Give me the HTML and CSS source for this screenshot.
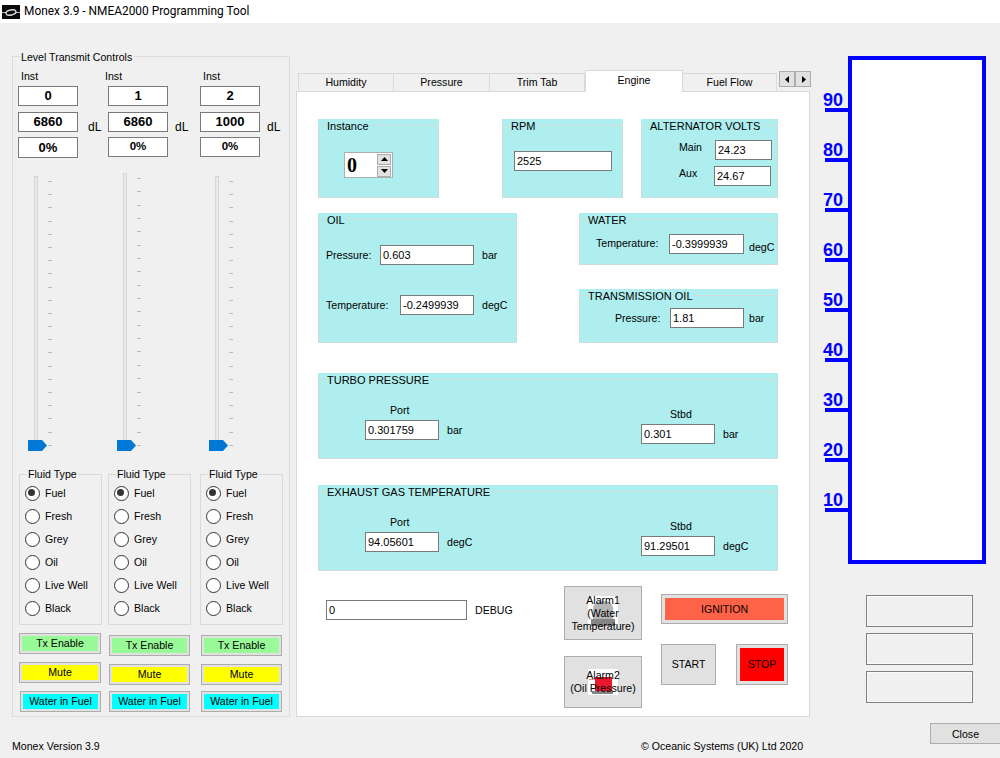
FILE: index.html
```html
<!DOCTYPE html>
<html lang="en">
<head>
    <meta charset="UTF-8">
    <title>Monex 3.9 - NMEA2000 Programming Tool</title>
    <link rel="stylesheet" href="styles.css">
</head>
<body>

<div class="window">
    <!-- Title bar -->
    <div class="titlebar">
        <svg class="app-icon" width="18" height="14" viewBox="0 0 18 14">
            <rect width="18" height="14" fill="#0a0a0a"/>
            <path d="M0 7.5H4M14 7.5H18" stroke="#bbb" stroke-width="1"/>
            <ellipse cx="9" cy="7.5" rx="5" ry="2.5" fill="none" stroke="#ddd" stroke-width="1.4" transform="rotate(-12 9 7.5)"/>
        </svg>
        <span class="title-text">Monex 3.9 - NMEA2000 Programming Tool</span>
    </div>

    <div class="main">
        <!-- Left panel -->
        <div class="left-col">
            <div class="group level-group">
                <div class="legend">Level Transmit Controls</div>
                <div class="level-grid">

                    <div class="level col-a">
                        <div class="inst-label">Inst</div>
                        <div class="value-box">0</div>
                        <div class="value-row"><div class="value-box">6860</div><span class="unit">dL</span></div>
                        <div class="value-box pct">0%</div>
                        <div class="slider">
                            <div class="track"></div>
                            <div class="ticks"><i></i><i></i><i></i><i></i><i></i><i></i><i></i><i></i><i></i><i></i><i></i><i></i><i></i><i></i><i></i><i></i><i></i><i></i><i></i><i></i><i></i></div>
                            <svg class="thumb" width="19" height="11" viewBox="0 0 19 11"><path d="M0 0H14L19 5.5L14 11H0Z" fill="#0078d7"/></svg>
                        </div>
                        <div class="group fluid">
                            <div class="legend">Fluid Type</div>
                            <div class="radio on">Fuel</div>
                            <div class="radio">Fresh</div>
                            <div class="radio">Grey</div>
                            <div class="radio">Oil</div>
                            <div class="radio">Live Well</div>
                            <div class="radio">Black</div>
                        </div>
                        <div class="level-btns">
                            <div class="btn green"><span>Tx Enable</span></div>
                            <div class="btn yellow"><span>Mute</span></div>
                            <div class="btn cyan"><span>Water in Fuel</span></div>
                        </div>
                    </div>

                    <div class="level col-b">
                        <div class="inst-label">Inst</div>
                        <div class="value-box">1</div>
                        <div class="value-row"><div class="value-box">6860</div><span class="unit">dL</span></div>
                        <div class="value-box pct">0%</div>
                        <div class="slider">
                            <div class="track"></div>
                            <div class="ticks"><i></i><i></i><i></i><i></i><i></i><i></i><i></i><i></i><i></i><i></i><i></i><i></i><i></i><i></i><i></i><i></i><i></i><i></i><i></i><i></i><i></i></div>
                            <svg class="thumb" width="19" height="11" viewBox="0 0 19 11"><path d="M0 0H14L19 5.5L14 11H0Z" fill="#0078d7"/></svg>
                        </div>
                        <div class="group fluid">
                            <div class="legend">Fluid Type</div>
                            <div class="radio on">Fuel</div>
                            <div class="radio">Fresh</div>
                            <div class="radio">Grey</div>
                            <div class="radio">Oil</div>
                            <div class="radio">Live Well</div>
                            <div class="radio">Black</div>
                        </div>
                        <div class="level-btns">
                            <div class="btn green"><span>Tx Enable</span></div>
                            <div class="btn yellow"><span>Mute</span></div>
                            <div class="btn cyan"><span>Water in Fuel</span></div>
                        </div>
                    </div>

                    <div class="level col-c">
                        <div class="inst-label">Inst</div>
                        <div class="value-box">2</div>
                        <div class="value-row"><div class="value-box">1000</div><span class="unit">dL</span></div>
                        <div class="value-box pct">0%</div>
                        <div class="slider">
                            <div class="track"></div>
                            <div class="ticks"><i></i><i></i><i></i><i></i><i></i><i></i><i></i><i></i><i></i><i></i><i></i><i></i><i></i><i></i><i></i><i></i><i></i><i></i><i></i><i></i><i></i></div>
                            <svg class="thumb" width="19" height="11" viewBox="0 0 19 11"><path d="M0 0H14L19 5.5L14 11H0Z" fill="#0078d7"/></svg>
                        </div>
                        <div class="group fluid">
                            <div class="legend">Fluid Type</div>
                            <div class="radio on">Fuel</div>
                            <div class="radio">Fresh</div>
                            <div class="radio">Grey</div>
                            <div class="radio">Oil</div>
                            <div class="radio">Live Well</div>
                            <div class="radio">Black</div>
                        </div>
                        <div class="level-btns">
                            <div class="btn green"><span>Tx Enable</span></div>
                            <div class="btn yellow"><span>Mute</span></div>
                            <div class="btn cyan"><span>Water in Fuel</span></div>
                        </div>
                    </div>

                </div>
            </div>
            <div class="version">Monex Version 3.9</div>
        </div>

        <!-- Tabs -->
        <div class="tab-col">
            <div class="tabs">
                <div class="tab t1">Humidity</div>
                <div class="tab t1">Pressure</div>
                <div class="tab t1">Trim Tab</div>
                <div class="tab active">Engine</div>
                <div class="tab t2">Fuel Flow</div>
                <div class="tab-arrows">
                    <div class="arrow"><svg width="5" height="7" viewBox="0 0 5 7"><path d="M4 0V7L0 3.5Z" fill="#000"/></svg></div>
                    <div class="arrow"><svg width="5" height="7" viewBox="0 0 5 7"><path d="M1 0V7L5 3.5Z" fill="#000"/></svg></div>
                </div>
            </div>
            <div class="tab-panel">

                <div class="row row-top">
                    <div class="group cyan-box instance">
                        <div class="legend">Instance</div>
                        <div class="spinner">
                            <span class="spin-val">0</span>
                            <div class="spin-btns">
                                <div class="spin-btn"><svg width="7" height="4" viewBox="0 0 7 4"><path d="M3.5 0L7 4H0Z" fill="#000"/></svg></div>
                                <div class="spin-btn"><svg width="7" height="4" viewBox="0 0 7 4"><path d="M0 0H7L3.5 4Z" fill="#000"/></svg></div>
                            </div>
                        </div>
                    </div>
                    <div class="group cyan-box rpm">
                        <div class="legend">RPM</div>
                        <div class="input rpm-input">2525</div>
                    </div>
                    <div class="group cyan-box volts">
                        <div class="legend">ALTERNATOR VOLTS</div>
                        <div class="volt-row main-v"><span>Main</span><div class="input">24.23</div></div>
                        <div class="volt-row aux-v"><span>Aux</span><div class="input">24.67</div></div>
                    </div>
                </div>

                <div class="row row-mid">
                    <div class="group cyan-box oil">
                        <div class="legend">OIL</div>
                        <div class="field f-oil-p"><span class="lab">Pressure:</span><div class="input">0.603</div><span class="suffix">bar</span></div>
                        <div class="field f-oil-t"><span class="lab">Temperature:</span><div class="input">-0.2499939</div><span class="suffix">degC</span></div>
                    </div>
                    <div class="stack">
                        <div class="group cyan-box water">
                            <div class="legend">WATER</div>
                            <div class="field f-water"><span class="lab">Temperature:</span><div class="input">-0.3999939</div><span class="suffix">degC</span></div>
                        </div>
                        <div class="group cyan-box trans">
                            <div class="legend">TRANSMISSION OIL</div>
                            <div class="field f-trans"><span class="lab">Pressure:</span><div class="input">1.81</div><span class="suffix">bar</span></div>
                        </div>
                    </div>
                </div>

                <div class="group cyan-box wide turbo">
                    <div class="legend">TURBO PRESSURE</div>
                    <div class="port-stbd">
                        <div class="reading">
                            <div class="reading-lab">Port</div>
                            <div class="field"><div class="input">0.301759</div><span class="suffix">bar</span></div>
                        </div>
                        <div class="reading low">
                            <div class="reading-lab">Stbd</div>
                            <div class="field"><div class="input">0.301</div><span class="suffix">bar</span></div>
                        </div>
                    </div>
                </div>

                <div class="group cyan-box wide exhaust">
                    <div class="legend">EXHAUST GAS TEMPERATURE</div>
                    <div class="port-stbd">
                        <div class="reading">
                            <div class="reading-lab">Port</div>
                            <div class="field"><div class="input">94.05601</div><span class="suffix">degC</span></div>
                        </div>
                        <div class="reading low">
                            <div class="reading-lab">Stbd</div>
                            <div class="field"><div class="input">91.29501</div><span class="suffix">degC</span></div>
                        </div>
                    </div>
                </div>

                <div class="row row-bottom">
                    <div class="debug"><div class="input debug-input">0</div><span>DEBUG</span></div>
                    <div class="alarms">
                        <div class="alarm alarm-1">
                            <svg class="alarm-icon" width="30" height="30" viewBox="0 0 30 30">
                                <rect width="30" height="30" fill="#fff"/>
                                <path d="M5 24V13C5 2 25 2 25 13V24Z" fill="#b5b5b5"/>
                                <rect x="3" y="23" width="24" height="7" fill="#858585"/>
                            </svg>
                            <span class="alarm-text">Alarm1<br>(Water<br>Temperature)</span>
                        </div>
                        <div class="alarm alarm-2">
                            <svg class="alarm-icon" width="30" height="26" viewBox="0 0 30 26">
                                <rect width="30" height="26" fill="#fff"/>
                                <rect x="7" y="8" width="17" height="14" fill="#e8192c"/>
                                <rect x="1" y="10" width="6" height="1" fill="#f08a90"/>
                                <rect x="4" y="22" width="21" height="3" fill="#858585"/>
                            </svg>
                            <span class="alarm-text">Alarm2<br>(Oil Pressure)</span>
                        </div>
                    </div>
                    <div class="engine-btns">
                        <div class="btn big ignition"><span>IGNITION</span></div>
                        <div class="start-stop">
                            <div class="plain-btn">START</div>
                            <div class="btn big stop"><span>STOP</span></div>
                        </div>
                    </div>
                </div>

            </div>
            <div class="copyright">© Oceanic Systems (UK) Ltd 2020</div>
        </div>

        <!-- Gauge -->
        <div class="gauge-col">
            <div class="gauge">
                <div class="scale">
                    <div class="mark">90</div>
                    <div class="mark">80</div>
                    <div class="mark">70</div>
                    <div class="mark">60</div>
                    <div class="mark">50</div>
                    <div class="mark">40</div>
                    <div class="mark">30</div>
                    <div class="mark">20</div>
                    <div class="mark">10</div>
                </div>
                <div class="tank"></div>
            </div>
            <div class="status-boxes">
                <div class="status"></div>
                <div class="status"></div>
                <div class="status"></div>
            </div>
            <div class="close-btn">Close</div>
        </div>
    </div>
</div>

</body>
</html>
```

FILE: styles.css
```css
* {
    box-sizing: border-box;
}

body {
    margin: 0;
    font-family: 'Liberation Sans', Arial, sans-serif;
    font-size: 10.6px;
    line-height: 13px;
    color: #000;
    background: #f0f0f0;
}

.window {
    width: 1000px;
    height: 758px;
    overflow: hidden;
    background: #f0f0f0;
}

/* Title bar */
.titlebar {
    height: 23px;
    background: white;
    display: flex;
    align-items: center;
    padding-left: 2px;
}

.app-icon {
    margin-right: 4px;
}

.title-text {
    font-family: 'Roboto', sans-serif;
    font-size: 11.9px;
}

.main {
    display: flex;
}

/* Group box */
.group {
    border: 1px solid #dcdcdc;
    background: #f0f0f0;
}

.legend {
    width: fit-content;
    margin: -6px 0 0 7px;
    padding: 0 1px;
    background: #f0f0f0;
    white-space: nowrap;
}

/* Left panel */
.left-col {
    width: 296px;
    padding: 33px 0 0 12px;
    flex-shrink: 0;
}

.level-group {
    width: 278px;
    height: 661px;
}

.level-grid {
    display: grid;
    grid-template-columns: 90px 92px 90px;
    padding-left: 5px;
}

.inst-label {
    margin: 6px 0 3px 3px;
}

.col-b .inst-label {
    margin-left: -3px;
}

.value-box {
    width: 60px;
    height: 20px;
    border: 1px solid #7a7a7a;
    background: white;
    font-size: 13px;
    font-weight: bold;
    line-height: 18px;
    text-align: center;
}

.value-row {
    display: flex;
    height: 20px;
    margin-top: 6px;
}

.unit {
    margin: 9px 0 0 10px;
    font-size: 12px;
}

.col-b .unit, .col-c .unit {
    margin-left: 7px;
}

.value-box.pct {
    margin-top: 5px;
}

.col-a .pct {
    height: 21px;
    line-height: 20px;
}

.col-b .pct, .col-c .pct {
    font-size: 11.5px;
    line-height: 17px;
}

.slider {
    position: relative;
    height: 282px;
    margin-top: 19px;
    margin-left: 10px;
}

.col-a .slider {
    margin-top: 18px;
}

.col-b .slider {
    margin-top: 16px;
    height: 285px;
    margin-left: 9px;
}

.col-c .slider {
    margin-left: 9px;
}

.track {
    position: absolute;
    left: 6px;
    top: 0;
    bottom: 8px;
    width: 4px;
    background: #e7eae7;
    border: 1px solid #d6d6d6;
}

.ticks {
    position: absolute;
    left: 20px;
    top: 5px;
    bottom: 12px;
    display: flex;
    flex-direction: column;
    justify-content: space-between;
}

.ticks i {
    display: block;
    width: 4px;
    height: 1px;
    background: #bcbcbc;
}

.thumb {
    position: absolute;
    left: 0;
    bottom: 7px;
}

.fluid {
    width: 83px;
    height: 151px;
    margin: 16px 0 0 1px;
    padding-top: 3px;
    border-color: #dadada;
}

.fluid .legend {
    margin: -10px 0 2px 7px;
}

.col-b .fluid, .col-c .fluid {
    margin-left: 0;
}

.radio {
    position: relative;
    height: 23px;
    padding-left: 25px;
    line-height: 20px;
}

.radio::before {
    content: "";
    position: absolute;
    left: 5px;
    top: 3px;
    width: 13px;
    height: 13px;
    border: 1px solid #333;
    border-radius: 50%;
    background: white;
}

.radio.on::after {
    content: "";
    position: absolute;
    left: 8px;
    top: 6px;
    width: 7px;
    height: 7px;
    border-radius: 50%;
    background: #333;
}

.level-btns {
    display: flex;
    flex-direction: column;
    gap: 8px;
    margin: 8px 0 0 1px;
}

.col-b .level-btns, .col-c .level-btns {
    margin: 10px 0 0 1px;
}

.btn {
    width: 82px;
    height: 21px;
    border: 1px solid #adadad;
    background: #e1e1e1;
    padding: 2px;
    text-align: center;
}

.col-b .btn, .col-c .btn {
    width: 81px;
}

.btn span {
    display: block;
    height: 100%;
    line-height: 15px;
}

.green span { background: #98fb98; }
.yellow span { background: #ffff00; }
.cyan span { background: #00ffff; }

.col-a .cyan {
    margin-left: 1px;
    width: 81px;
}

.col-b .cyan, .col-c .cyan {
    margin-top: -2px;
}

.version {
    margin-top: 23px;
}

/* Tabs */
.tab-col {
    width: 515px;
    padding-top: 48px;
    flex-shrink: 0;
}

.tabs {
    display: flex;
    height: 21px;
    padding-left: 2px;
    align-items: flex-end;
    position: relative;
    z-index: 1;
    margin-bottom: -1px;
}

.tab {
    height: 19px;
    border: 1px solid #d9d9d9;
    border-left: 0;
    background: #f0f0f0;
    text-align: center;
    line-height: 17px;
}

.t1 {
    width: 96px;
}

.tab:first-child {
    border-left: 1px solid #d9d9d9;
}

.tab:nth-child(3) {
    width: 95px;
}

.tab.active {
    width: 98px;
    height: 22px;
    border-left: 1px solid #d9d9d9;
    border-bottom: 0;
    background: white;
    line-height: 19px;
}

.t2 {
    width: 94px;
}

.tab-arrows {
    display: flex;
    align-self: flex-start;
    margin-left: 2px;
}

.arrow {
    width: 16px;
    height: 16px;
    border: 1px solid #adadad;
    background: #e1e1e1;
    display: flex;
    align-items: center;
    justify-content: center;
}

.tab-panel {
    width: 514px;
    height: 626px;
    border: 1px solid #d9d9d9;
    background: white;
    padding: 27px 0 0 21px;
}

.row {
    display: flex;
}

/* Cyan group boxes */
.cyan-box {
    position: relative;
    border: 0;
    padding-top: 1px;
    background: #afeeee;
}

.cyan-box::before {
    content: "";
    position: absolute;
    top: 6px;
    left: 0;
    right: 0;
    bottom: 0;
    border: 1px solid #cfdcdc;
}

.cyan-box > .legend {
    position: relative;
    background: #afeeee;
    margin: 0 0 5px 8px;
    font-size: 11px;
}

.cyan-box > .field, .cyan-box > .port-stbd, .cyan-box > .spinner,
.cyan-box > .input, .cyan-box > .volt-row {
    position: relative;
}

.instance, .rpm, .volts {
    height: 79px;
}

.instance {
    width: 121px;
}

.rpm {
    width: 121px;
    margin-left: 63px;
}

.volts {
    width: 137px;
    margin-left: 18px;
}

.spinner {
    display: flex;
    align-items: center;
    width: 49px;
    height: 26px;
    margin: 19px 0 0 26px;
    border: 1px solid #adadad;
    background: white;
    padding: 1px;
}

.spin-val {
    width: 31px;
    padding-left: 1px;
    font-family: 'Liberation Serif', serif;
    font-size: 20px;
    font-weight: bold;
}

.spin-btns {
    display: flex;
    flex-direction: column;
    gap: 1px;
}

.spin-btn {
    width: 14px;
    height: 11px;
    border: 1px solid #adadad;
    background: #e1e1e1;
    display: flex;
    align-items: center;
    justify-content: center;
}

.input {
    width: 94px;
    height: 20px;
    border: 1px solid #7a7a7a;
    background: white;
    padding-left: 2px;
    line-height: 18px;
    font-size: 11px;
    white-space: nowrap;
}

.rpm-input {
    width: 98px;
    margin: 18px 0 0 12px;
}

.volt-row {
    display: flex;
    justify-content: space-between;
}

.volt-row .input {
    width: 57px;
}

.volt-row span {
    padding-top: 1px;
}

.main-v {
    margin: 7px 6px 0 38px;
}

.aux-v {
    margin: 6px 7px 0 38px;
}

.field {
    display: flex;
    align-items: center;
}

.lab {
    white-space: nowrap;
}

.suffix {
    margin-left: 8px;
}

.row-mid {
    margin-top: 15px;
}

.oil {
    width: 199px;
    height: 130px;
}

.f-oil-p {
    padding: 13px 0 0 8px;
}

.f-oil-p .lab {
    width: 54px;
}

.f-oil-t {
    padding: 30px 0 0 8px;
}

.f-oil-t .lab {
    width: 74px;
}

.f-oil-t .input {
    width: 74px;
}

.stack {
    margin-left: 62px;
}

.water {
    width: 199px;
    height: 52px;
}

.f-water {
    padding: 1px 0 0 17px;
}

.f-water .lab {
    width: 73px;
}

.f-water .input {
    width: 75px;
}

.f-water .suffix {
    margin: 8px 0 0 5px;
}

.trans {
    width: 199px;
    height: 54px;
    margin-top: 24px;
}

.f-trans {
    padding-left: 36px;
}

.f-trans .lab {
    width: 55px;
}

.f-trans .input {
    width: 74px;
}

.f-trans .suffix {
    margin-left: 5px;
}

.wide {
    width: 460px;
    height: 86px;
}

.turbo {
    margin-top: 30px;
}

.exhaust {
    margin-top: 26px;
}

.port-stbd {
    display: flex;
    justify-content: space-between;
    padding: 12px 0 0 47px;
    width: 433px;
}

.reading-lab {
    padding-left: 25px;
    margin-bottom: 3px;
}

.reading .input {
    width: 74px;
}

.reading.low {
    padding-top: 4px;
    width: 110px;
}

.low .reading-lab {
    padding-left: 29px;
}

.row-bottom {
    margin-top: 15px;
}

.debug {
    display: flex;
    align-items: center;
    height: 20px;
    margin: 14px 0 0 8px;
    width: 238px;
}

.debug-input {
    width: 141px;
    margin-right: 8px;
}

.alarms {
    display: flex;
    flex-direction: column;
    gap: 16px;
}

.alarm {
    position: relative;
    width: 78px;
    height: 54px;
    border: 1px solid #adadad;
    background: #e1e1e1;
    display: flex;
    align-items: center;
    justify-content: center;
    text-align: center;
}

.alarm-2 {
    height: 52px;
}

.alarm-text {
    position: relative;
}

.alarm-icon {
    position: absolute;
    left: 23px;
}

.alarm-1 .alarm-icon { top: 9px; }
.alarm-2 .alarm-icon { top: 12px; }

.engine-btns {
    margin-left: 19px;
    padding-top: 8px;
}

.btn.big {
    padding: 3px;
}

.btn.big span {
    line-height: 22px;
}

.ignition {
    width: 127px;
    height: 30px;
}

.ignition span {
    background: #ff6347;
}

.start-stop {
    display: flex;
    justify-content: space-between;
    width: 127px;
    margin-top: 20px;
}

.plain-btn {
    width: 55px;
    height: 41px;
    border: 1px solid #adadad;
    background: #e1e1e1;
    text-align: center;
    line-height: 39px;
}

.stop {
    width: 52px;
    height: 41px;
}

.stop span {
    background: #ff0000;
}

.btn.big.stop span {
    line-height: 33px;
}

.copyright {
    margin-top: 23px;
    padding-left: 345px;
    white-space: nowrap;
}

/* Gauge */
.gauge-col {
    flex: 1;
    padding-top: 33px;
}

.gauge {
    display: flex;
    margin-left: 14px;
}

.scale {
    padding-top: 6px;
    width: 23px;
}

.mark {
    height: 50px;
    border-bottom: 4px solid #0000ff;
    color: #0000ff;
    font-size: 18px;
    font-weight: bold;
    line-height: 20px;
    padding-top: 28px;
    text-indent: -2px;
    white-space: nowrap;
}

.tank {
    width: 138px;
    height: 508px;
    border: 4px solid #0000ff;
    background: white;
}

.status-boxes {
    display: flex;
    flex-direction: column;
    gap: 6px;
    margin: 31px 0 0 55px;
}

.status {
    width: 107px;
    height: 32px;
    border: 1px solid #7f7f7f;
    box-shadow: inset 0 0 0 1px #fafafa;
}

.close-btn {
    width: 70px;
    height: 21px;
    margin: 20px 0 0 119px;
    border: 1px solid #adadad;
    border-right: 0;
    background: #e1e1e1;
    text-align: center;
    line-height: 20px;
}
```
